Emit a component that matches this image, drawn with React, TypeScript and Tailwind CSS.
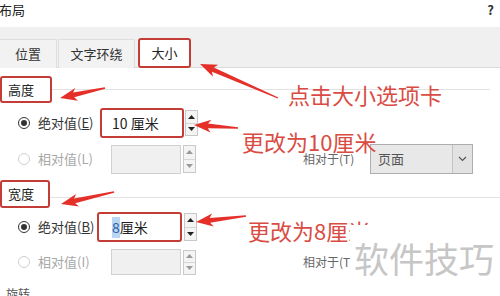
import React from "react";

type Pt = [number, number];

function arrowPoints(tail: Pt, tip: Pt): string {
  const dx = tip[0] - tail[0];
  const dy = tip[1] - tail[1];
  const len = Math.hypot(dx, dy);
  const ux = dx / len;
  const uy = dy / len;
  const nx = -uy;
  const ny = ux;
  const headLen = 14;
  const neck: Pt = [tip[0] - ux * headLen, tip[1] - uy * headLen];
  const barb: Pt = [tip[0] - ux * (headLen + 3), tip[1] - uy * (headLen + 3)];
  const p = (b: Pt, w: number): string => `${(b[0] + nx * w).toFixed(1)},${(b[1] + ny * w).toFixed(1)}`;
  return [
    p(tail, 0.7),
    p(neck, 2.4),
    p(barb, 6.5),
    `${tip[0]},${tip[1]}`,
    p(barb, -6.5),
    p(neck, -2.4),
    p(tail, -0.7),
  ].join(" ");
}

const arrows: { tail: Pt; tip: Pt }[] = [
  { tail: [278, 98], tip: [200, 64] },
  { tail: [105, 88], tip: [60, 98] },
  { tail: [238, 128], tip: [194, 125] },
  { tail: [114, 192], tip: [61, 204] },
  { tail: [246, 216], tip: [196, 222] },
];

function Radio({ on, disabled }: { on?: boolean; disabled?: boolean }) {
  return (
    <span
      className={
        "flex h-[12px] w-[12px] items-center justify-center rounded-full border " +
        (disabled ? "border-[#cfcfcf] bg-white" : "border-[#333333] bg-white")
      }
    >
      {on ? <span className="h-[6px] w-[6px] rounded-full bg-[#333333]" /> : null}
    </span>
  );
}

function Spinner({ h, disabled }: { h: string; disabled?: boolean }) {
  const c = disabled ? "#9a9a9a" : "#222222";
  return (
    <span className={`flex ${h} w-[13px] flex-col border border-[#c9c9c9] bg-[#f4f4f4]`}>
      <span className="flex flex-1 items-center justify-center border-b border-[#d6d6d6]">
        <svg width="7" height="4" viewBox="0 0 7 4">
          <polygon points="0,4 3.5,0 7,4" fill={c} />
        </svg>
      </span>
      <span className="flex flex-1 items-center justify-center">
        <svg width="7" height="4" viewBox="0 0 7 4">
          <polygon points="0,0 7,0 3.5,4" fill={c} />
        </svg>
      </span>
    </span>
  );
}

export default function App() {
  return (
    <div className="relative h-[296px] w-[500px] overflow-hidden bg-white font-['Noto_Sans_CJK_SC','Microsoft_YaHei',sans-serif] text-[13px] text-[#333333]">
      {/* title */}
      <div className="flex h-[27px] items-start justify-between">
        <span className="-ml-[1px] pt-[3px] leading-none text-[13px] text-[#222]">布局</span>
        <span className="pr-[6px] pt-[3px] text-[13px] font-bold leading-none text-[#333]">?</span>
      </div>

      {/* tab strip */}
      <div className="flex h-[41px] items-end border-b border-[#d9d9d9] bg-[#f0f0f0]">
        <div className="mb-[-1px] flex h-[29px] w-[57px] items-center justify-center border border-b-0 border-l-0 border-[#dedede] bg-[#f2f2f2] text-[#333]">
          位置
        </div>
        <div className="mb-[-1px] ml-[1px] flex h-[29px] w-[77px] items-center justify-center border border-b-0 border-[#dedede] bg-[#f2f2f2] text-[#333]">
          文字环绕
        </div>
        <div className="mb-[-1px] ml-[3px] flex h-[30px] w-[53px] items-center justify-center rounded-[3px] border-2 border-[#c43c36] bg-white text-[#222]">
          大小
        </div>
      </div>

      {/* 高度 */}
      <div className="mt-[8px] flex h-[27px] items-center">
        <div className="flex h-[27px] w-[52px] items-center rounded-[3px] border-2 border-[#c43c36] pl-[6px] text-[#222]">
          高度
        </div>
        <div className="mr-[10px] h-px flex-1 bg-[#e2e2e2]" />
      </div>

      {/* row 1 */}
      <div className="mt-[5px] flex h-[30px] items-center pl-[18px]">
        <Radio on />
        <span className="ml-[8px] w-[62px] text-[#333]">
          绝对值(<span className="underline">E</span>)
        </span>
        <div className="flex h-[30px] w-[84px] items-center rounded-[3px] border-2 border-[#c43c36] bg-white pl-[10px] text-[14px] text-[#222]">
          10 厘米
        </div>
        <span className="ml-[1px]">
          <Spinner h="h-[26px]" />
        </span>
      </div>

      {/* row 2 */}
      <div className="mt-[6px] flex h-[30px] items-center pl-[18px]">
        <Radio disabled />
        <span className="ml-[8px] w-[73px] text-[#a8a8a8]">相对值(L)</span>
        <div className="h-[29px] w-[70px] border border-[#d0d0d0] bg-[#f0f0f0]" />
        <span className="ml-[2px]">
          <Spinner h="h-[28px]" disabled />
        </span>
        <span className="ml-[107px] w-[67px] text-[12px] text-[#666]">相对于(T)</span>
        <div className="flex h-[30px] w-[103px] items-center border border-[#adadad] bg-[#e8e8e8]">
          <span className="flex-1 pl-[7px] text-[13px] text-[#555]">页面</span>
          <span className="flex h-full w-[20px] items-center justify-center border-l border-[#c4c4c4] bg-[#e2e2e2]">
            <svg width="9" height="6" viewBox="0 0 9 6">
              <polyline points="1,1 4.5,4.5 8,1" fill="none" stroke="#555" strokeWidth="1.2" />
            </svg>
          </span>
        </div>
      </div>

      {/* 宽度 */}
      <div className="mt-[6px] flex h-[28px] items-start">
        <div className="flex h-[28px] w-[50px] items-center rounded-[3px] border-2 border-[#c43c36] pl-[6px] text-[#222]">
          宽度
        </div>
        <div className="mr-[0px] mt-[17px] h-px flex-1 bg-[#e2e2e2]" />
      </div>

      {/* row 3 */}
      <div className="mt-[4px] flex h-[30px] items-center pl-[18px]">
        <Radio on />
        <span className="ml-[8px] w-[59px] text-[#333]">
          绝对值(<span className="underline">B</span>)
        </span>
        <div className="flex h-[30px] w-[85px] items-center rounded-[3px] border-2 border-[#c43c36] bg-white pl-[13px] text-[14px] text-[#222]">
          <span className="bg-[#b9d7f3] text-[#2a63a8]">8</span>
          <span>厘米</span>
        </div>
        <span className="ml-[2px]">
          <Spinner h="h-[28px]" />
        </span>
      </div>

      {/* row 4 */}
      <div className="mt-[7px] flex h-[26px] items-center pl-[18px]">
        <Radio disabled />
        <span className="ml-[8px] w-[73px] text-[#a8a8a8]">相对值(I)</span>
        <div className="h-[26px] w-[70px] border border-[#d0d0d0] bg-[#f0f0f0]" />
        <span className="ml-[2px]">
          <Spinner h="h-[25px]" disabled />
        </span>
        <span className="ml-[107px] text-[12px] text-[#666]">相对于(T)</span>
      </div>

      <div className="mt-[13px] pl-[6px] text-[12px] leading-none text-[#555]">旋转</div>

      {/* annotations */}
      <svg className="pointer-events-none absolute left-0 top-0" width="500" height="296" viewBox="0 0 500 296">
        {arrows.map((a, i) => (
          <polygon key={i} points={arrowPoints(a.tail, a.tip)} fill="#e5302a" />
        ))}
      </svg>

      <span className="absolute left-[288px] top-[83px] text-[22px] leading-none text-[#d94c44]">
        点击大小选项卡
      </span>
      <span className="absolute left-[242px] top-[130px] text-[22px] leading-none text-[#d94c44]">
        更改为10厘米
      </span>
      <span className="absolute left-[248px] top-[219px] text-[22px] leading-none text-[#d94c44]">
        更改为8厘米
      </span>
      <div className="absolute left-[350px] top-[225px] flex h-[56px] w-[150px] items-start bg-white pl-[4px] pt-[15px]">
        <span className="text-[35px] leading-none text-[#c6c6c6]">软件技巧</span>
      </div>
    </div>
  );
}
